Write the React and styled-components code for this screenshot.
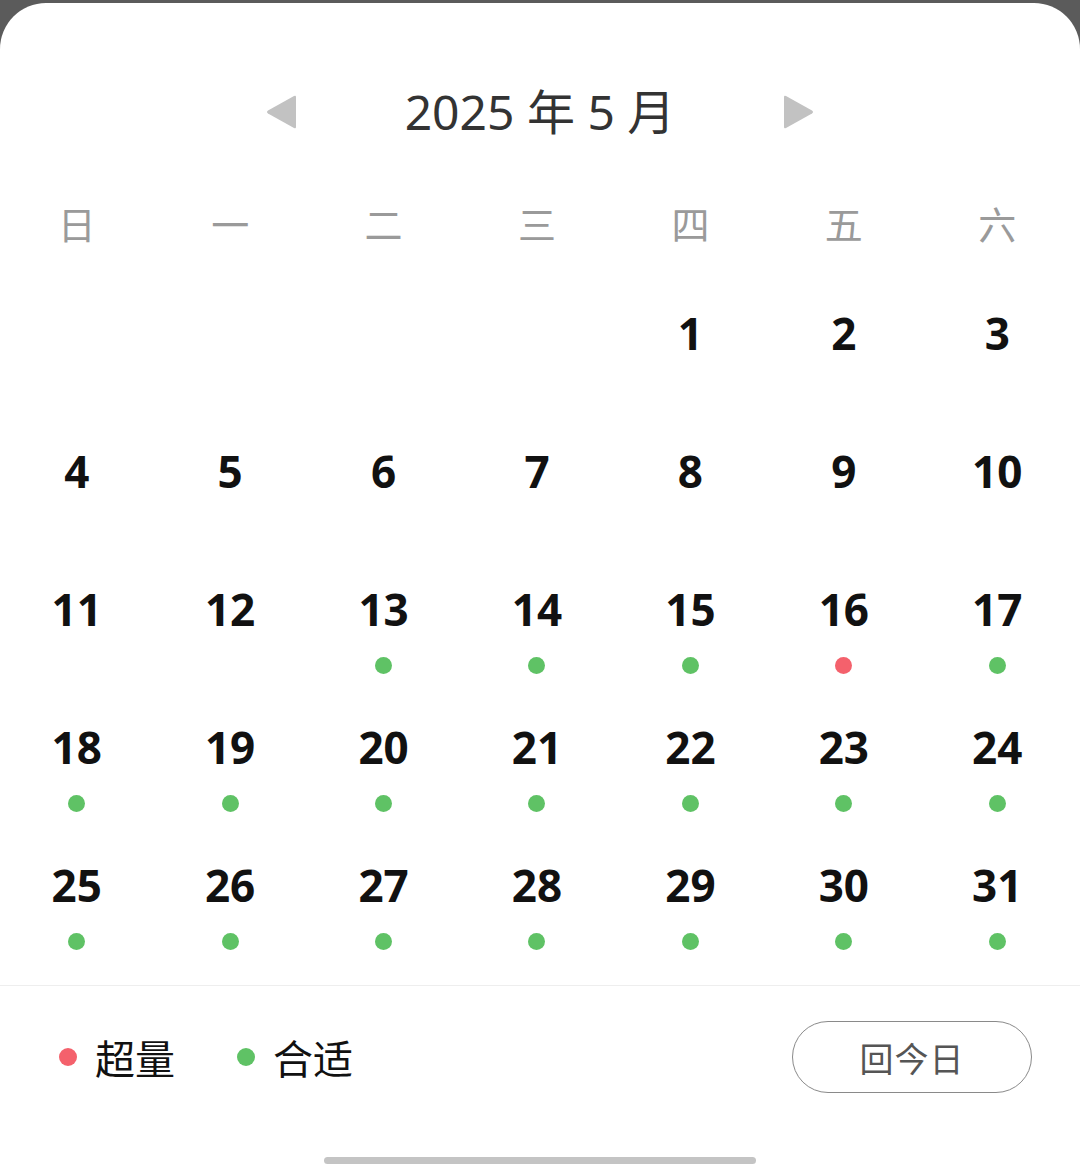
import React from 'react';
import styled, { createGlobalStyle } from 'styled-components';

const GlobalStyle = createGlobalStyle`
  html, body {
    margin: 0;
    padding: 0;
    background: #5b5b5b;
  }
  body {
    font-family: "Noto Sans", "Noto Sans CJK SC", sans-serif;
  }
`;

const Sheet = styled.div`
  margin-top: 3px;
  height: 1164px;
  background: #fff;
  border-radius: 46px 46px 0 0;
  display: flex;
  flex-direction: column;
  overflow: hidden;
`;

const Header = styled.div`
  height: 175px;
  box-sizing: border-box;
  padding-top: 79px;
  display: flex;
  justify-content: center;
  align-items: flex-start;
  gap: 106px;
`;

const Arrow = styled.button`
  border: none;
  background: none;
  padding: 0;
  height: 60px;
  display: flex;
  align-items: center;
  cursor: pointer;
`;

const Title = styled.div`
  font-family: "Noto Sans", "Noto Sans CJK SC", sans-serif;
  font-size: 48px;
  line-height: 60px;
  color: #333;
  white-space: nowrap;
`;

const Grid = styled.div`
  display: grid;
  grid-template-columns: repeat(7, 1fr);
  padding-right: 6px;
`;

const WeekCell = styled.div`
  height: 96px;
  line-height: 90px;
  text-align: center;
  font-family: "Noto Sans CJK SC", sans-serif;
  font-size: 38px;
  color: #9a9a9a;
`;

const DayCell = styled.div`
  height: 138px;
  box-sizing: border-box;
  padding-top: 29px;
  display: flex;
  flex-direction: column;
  align-items: center;
`;

const DayNum = styled.div`
  font-family: "Noto Sans", sans-serif;
  font-weight: 700;
  font-size: 44px;
  line-height: 60px;
  color: #111;
`;

const Dot = styled.span`
  display: block;
  width: ${(p) => p.size || 17}px;
  height: ${(p) => p.size || 17}px;
  border-radius: 50%;
  background: ${(p) => (p.status === 'over' ? '#f4616c' : '#5fc265')};
  margin-top: ${(p) => p.offset || 0}px;
  flex-shrink: 0;
`;

const Divider = styled.div`
  margin-top: 21px;
  height: 1px;
  background: #eeeeee;
`;

const Footer = styled.div`
  padding: 35px 48px 0 59px;
  display: flex;
  align-items: center;
  justify-content: space-between;
`;

const Legend = styled.div`
  display: flex;
  align-items: center;
  gap: 62px;
`;

const LegendItem = styled.div`
  display: flex;
  align-items: center;
  gap: 18px;
  font-family: "Noto Sans CJK SC", sans-serif;
  font-size: 40px;
  color: #111;
`;

const TodayButton = styled.button`
  width: 240px;
  height: 72px;
  border-radius: 36px;
  border: 1.5px solid #8a8a8a;
  background: #fff;
  font-family: "Noto Sans CJK SC", sans-serif;
  font-size: 34px;
  color: #555;
  letter-spacing: 1px;
  cursor: pointer;
`;

const HomeBar = styled.div`
  margin: 64px auto 0;
  width: 432px;
  height: 7px;
  border-radius: 4px;
  background: #c4c4c4;
`;

const weekDays = ['日', '一', '二', '三', '四', '五', '六'];

const statusOf = (d) => {
  if (d < 13) return null;
  if (d === 16) return 'over';
  return 'ok';
};

const TriLeft = () => (
  <svg width="34" height="36" viewBox="0 0 34 36">
    <path d="M31 3 L31 33 Q31 35 29 34 L3 19.5 Q1 18 3 16.5 L29 2 Q31 1 31 3 Z" fill="#c2c2c2" />
  </svg>
);

const TriRight = () => (
  <svg width="34" height="36" viewBox="0 0 34 36">
    <path d="M3 3 L3 33 Q3 35 5 34 L31 19.5 Q33 18 31 16.5 L5 2 Q3 1 3 3 Z" fill="#c2c2c2" />
  </svg>
);

const App = () => {
  const cells = [];
  for (let i = 0; i < 4; i++) cells.push(null);
  for (let d = 1; d <= 31; d++) cells.push(d);

  return (
    <>
      <GlobalStyle />
      <Sheet>
        <Header>
          <Arrow aria-label="上个月">
            <TriLeft />
          </Arrow>
          <Title>2025 年 5 月</Title>
          <Arrow aria-label="下个月">
            <TriRight />
          </Arrow>
        </Header>
        <Grid>
          {weekDays.map((w) => (
            <WeekCell key={w}>{w}</WeekCell>
          ))}
        </Grid>
        <Grid>
          {cells.map((d, i) => (
            <DayCell key={i}>
              {d && <DayNum>{d}</DayNum>}
              {d && statusOf(d) && <Dot status={statusOf(d)} offset={18} />}
            </DayCell>
          ))}
        </Grid>
        <Divider />
        <Footer>
          <Legend>
            <LegendItem>
              <Dot status="over" size={18} />
              超量
            </LegendItem>
            <LegendItem>
              <Dot status="ok" size={18} />
              合适
            </LegendItem>
          </Legend>
          <TodayButton>回今日</TodayButton>
        </Footer>
        <HomeBar />
      </Sheet>
    </>
  );
};

export default App;
